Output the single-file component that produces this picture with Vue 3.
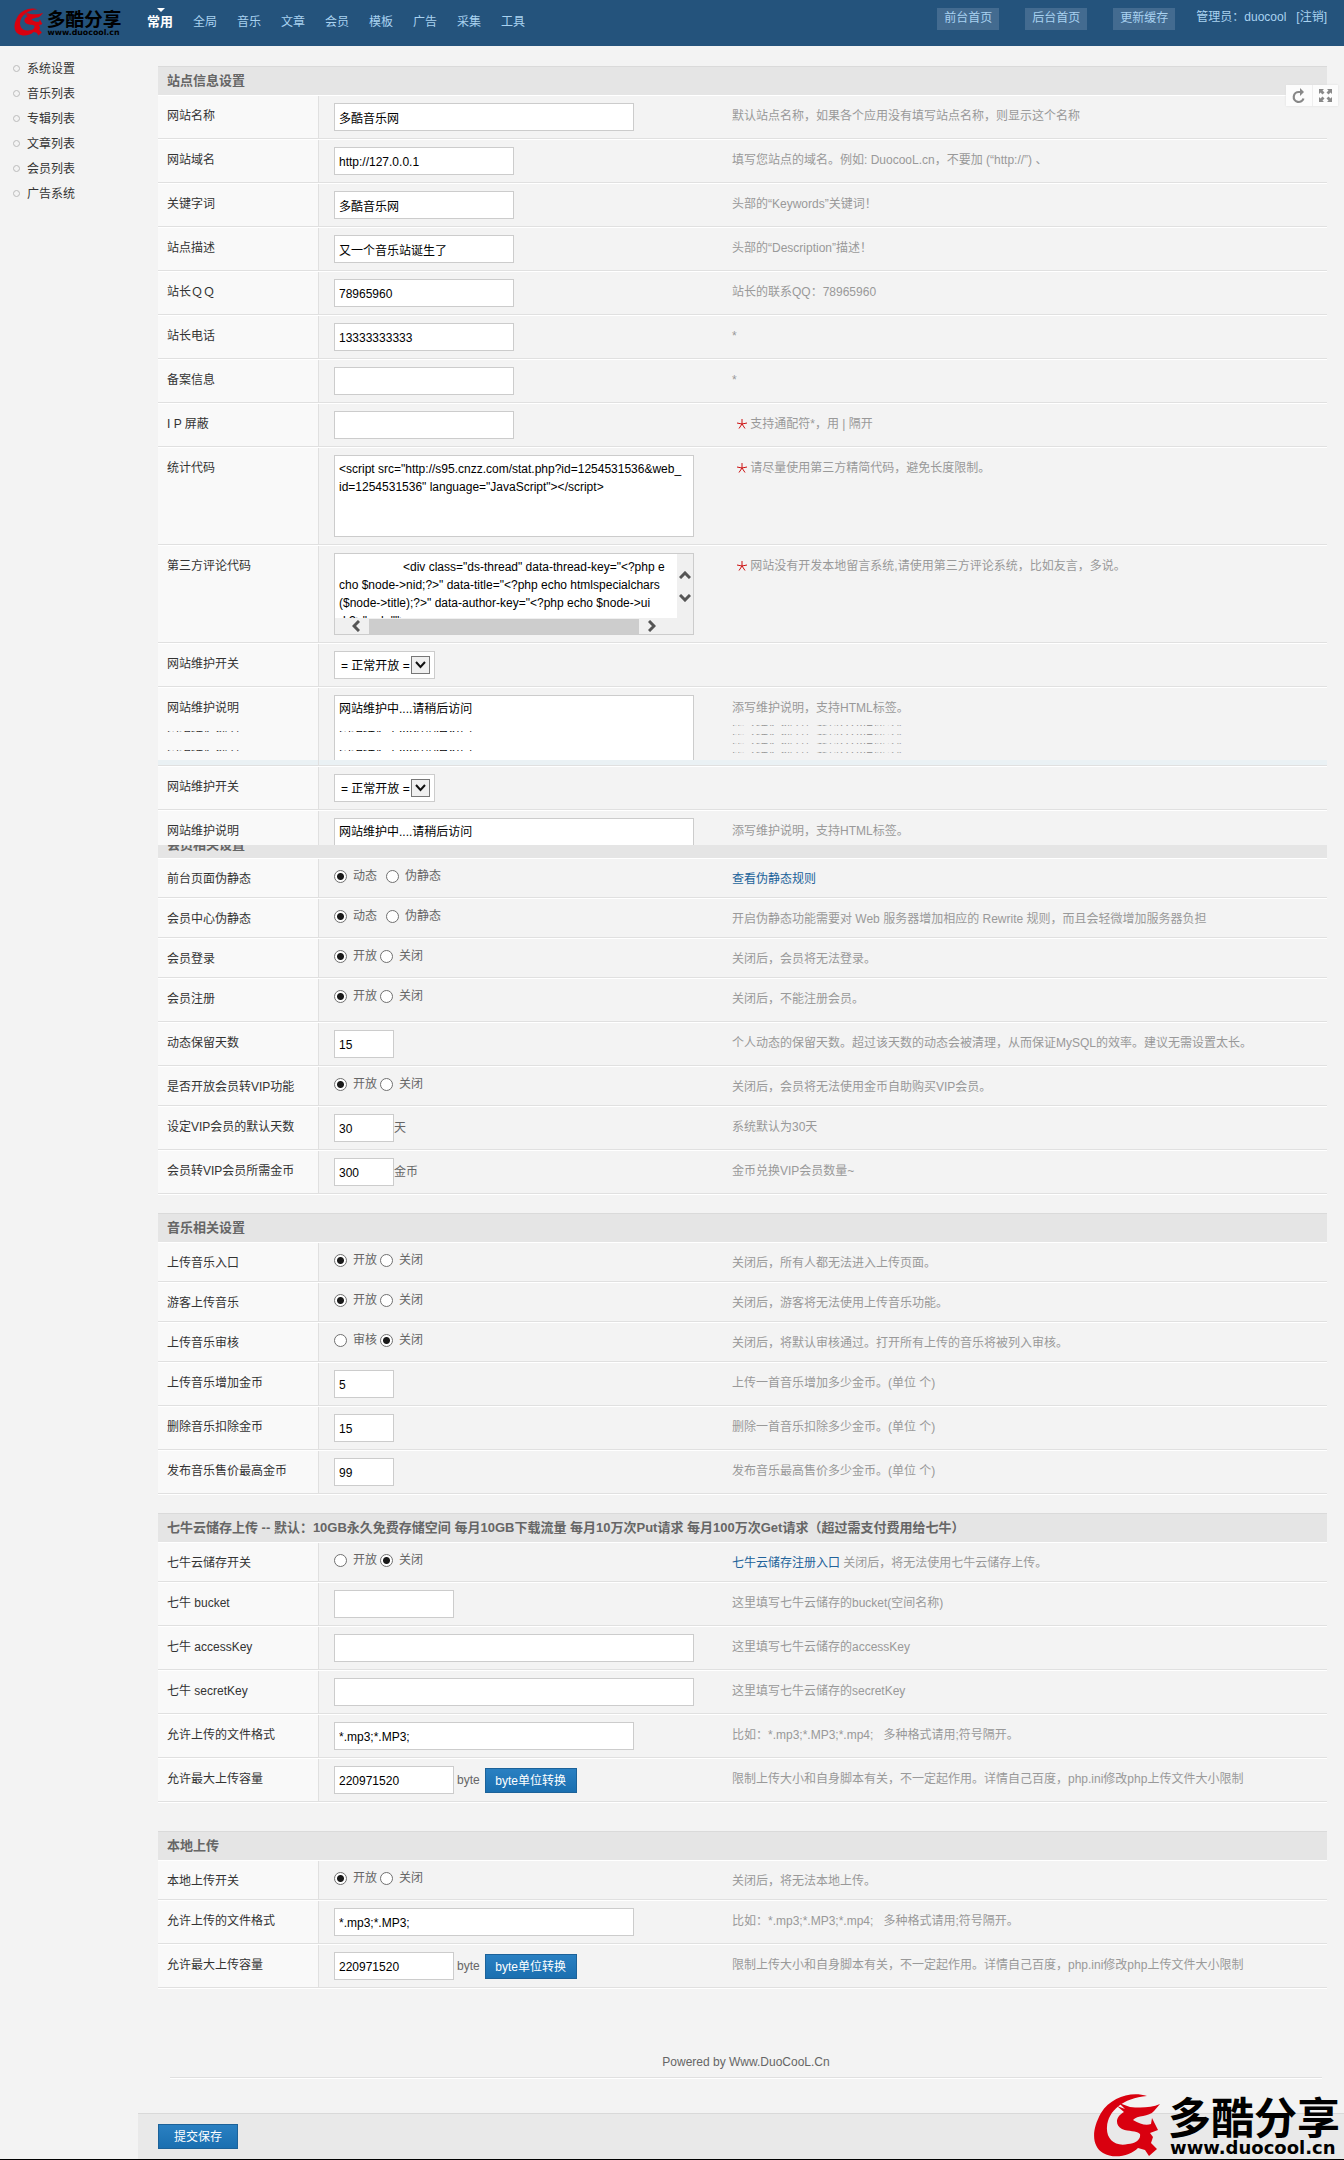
<template>
  <div class="page">
    <header class="topbar">
      <a href="#" class="logo" aria-label="多酷分享"><Brand /></a>
      <nav class="menu">
        <a v-for="(item, index) in menu" :key="item" href="#" :class="{ active: index === 0 }">{{ item }}</a>
      </nav>
      <div class="tools">
        <a v-for="item in shortcuts" :key="item" href="#" class="shortcut">{{ item }}</a>
        <span class="admin">管理员：duocool&nbsp;&nbsp; <a href="#">[注销]</a></span>
      </div>
    </header>

    <div class="body">
      <ul class="sidebar">
        <li v-for="item in sidebar" :key="item"><a href="#">{{ item }}</a></li>
      </ul>

      <main class="main">
        <div class="corner">
          <button type="button" aria-label="刷新">
            <svg width="14" height="16" viewBox="0 0 14 16">
              <path d="M11.5 10.5 A5 5 0 1 1 7 4 L9 4" fill="none" stroke="#888" stroke-width="2.2" />
              <path d="M8 0 L12 4 L8 8 Z" fill="#888" />
            </svg>
          </button>
          <button type="button" aria-label="全屏">
            <svg width="13" height="13" viewBox="0 0 13 13" fill="#888">
              <path d="M0 0 H5 L3.5 1.5 L5.5 3.5 L3.5 5.5 L1.5 3.5 L0 5 Z" />
              <path d="M13 0 V5 L11.5 3.5 L9.5 5.5 L7.5 3.5 L9.5 1.5 L8 0 Z" />
              <path d="M0 13 V8 L1.5 9.5 L3.5 7.5 L5.5 9.5 L3.5 11.5 L5 13 Z" />
              <path d="M13 13 H8 L9.5 11.5 L7.5 9.5 L9.5 7.5 L11.5 9.5 L13 8 Z" />
            </svg>
          </button>
        </div>

        <form class="settings" @submit.prevent>
          <section v-for="(section, s) in sections" :key="section.title" class="section" :class="section.kind">
            <h2><span>{{ section.title }}</span></h2>
            <div v-for="(row, r) in section.rows" :key="r" class="row" :class="row.kind">
              <div class="name">
                <label v-if="row.type !== 'radio'" :for="`f${s}-${r}`">{{ row.label }}</label>
                <span v-else :id="`f${s}-${r}`">{{ row.label }}</span>
                <template v-if="row.kind === 'torn'">
                  <div v-for="n in 2" :key="n" class="sliver" aria-hidden="true"><span>{{ row.label }}</span></div>
                </template>
              </div>

              <div class="control">
                <template v-if="row.type === 'text'">
                  <input :id="`f${s}-${r}`" v-model="row.value" type="text" :class="row.size" />
                  <span v-if="row.unit" class="unit">{{ row.unit }}</span>
                  <template v-if="row.convert">
                    <span class="unit spaced">byte</span>
                    <button type="button" class="btn convert">byte单位转换</button>
                  </template>
                </template>

                <div v-else-if="row.type === 'radio'" class="radios" :class="{ wide: row.options[1] === '伪静态' }" role="radiogroup" :aria-labelledby="`f${s}-${r}`">
                  <label v-for="option in row.options" :key="option">
                    <input v-model="row.value" type="radio" :name="`r${s}-${r}`" :value="option" />{{ option }}
                  </label>
                </div>

                <div v-else-if="row.type === 'select'" class="select">
                  <select :id="`f${s}-${r}`">
                    <option>= 正常开放 =</option>
                    <option>= 关闭维护 =</option>
                  </select>
                  <svg width="19" height="18" viewBox="0 0 19 18" aria-hidden="true">
                    <rect x="0.5" y="0.5" width="18" height="17" fill="#f0f0f0" stroke="#777" />
                    <path d="M5 6 L9.5 11 L14 6" fill="none" stroke="#111" stroke-width="2" />
                  </svg>
                </div>

                <div v-else-if="row.type === 'scroll'" class="scrollbox">
                  <textarea :id="`f${s}-${r}`" v-model="row.value"></textarea>
                  <div class="vbar" aria-hidden="true">
                    <svg width="12" height="8" viewBox="0 0 12 8"><path d="M1 7 L6 2 L11 7" /></svg>
                    <svg width="12" height="8" viewBox="0 0 12 8"><path d="M1 1 L6 6 L11 1" /></svg>
                  </div>
                  <div class="hbar" aria-hidden="true">
                    <svg width="8" height="12" viewBox="0 0 8 12"><path d="M7 1 L2 6 L7 11" /></svg>
                    <span class="thumb"></span>
                    <svg width="8" height="12" viewBox="0 0 8 12"><path d="M1 1 L6 6 L1 11" /></svg>
                  </div>
                </div>

                <template v-else>
                  <textarea :id="`f${s}-${r}`" v-model="row.value" class="area"></textarea>
                  <div v-if="row.kind === 'torn'" class="overlay" aria-hidden="true">
                    <div v-for="n in 2" :key="n" class="sliver"><span>{{ row.value }}</span></div>
                  </div>
                </template>
              </div>

              <div class="hint">
                <svg v-if="row.star" class="star" width="10" height="10" viewBox="0 0 10 10" aria-hidden="true">
                  <path d="M5 5 V0 M5 5 L0 4 M5 5 L10 4 M5 5 L2 9.5 M5 5 L8 9.5" />
                </svg>
                <a v-if="row.link" href="#">{{ row.link }}</a>
                {{ row.hint }}
                <template v-if="row.kind === 'torn'">
                  <div v-for="n in 4" :key="n" class="sliver" aria-hidden="true"><span>{{ row.hint }}</span></div>
                </template>
              </div>
            </div>
          </section>

          <footer class="powered">Powered by Www.DuoCooL.Cn</footer>

          <div class="submitbar">
            <button type="submit" class="btn submit">提交保存</button>
            <Brand class="watermark" />
          </div>
        </form>
      </main>
    </div>
  </div>
</template>

<script setup>
import { h, reactive } from "vue";

const dragon =
  "M54 3 C38 -2 18 4 8 20 C-2 38 -1 53 10 60 C22 67 38 62 45 55 L52 57 L56 63 L64 56 L58 50 L60 44 L57 40 L65 37 L59 25 L58 31 C53 33 47 31 40 27 C44 22 56 24 61 18 L67 11 C58 15 47 15 37 14 L26 10 L32 16 L24 13 L31 19 C22 24 22 32 29 36 C36 39 43 37 47 41 C48 47 42 51 35 51 C22 54 13 46 14 34 C15 18 30 5 54 3 Z";

const Brand = () =>
  h("svg", { viewBox: "0 0 248 66", class: "brand" }, [
    h("path", { d: dragon, fill: "#d9000f" }),
    h("text", { x: 75, y: 41, class: "brand-name" }, "多酷分享"),
    h("text", { x: 77, y: 61, class: "brand-url" }, "www.duocool.cn"),
  ]);

const menu = ["常用", "全局", "音乐", "文章", "会员", "模板", "广告", "采集", "工具"];
const shortcuts = ["前台首页", "后台首页", "更新缓存"];
const sidebar = ["系统设置", "音乐列表", "专辑列表", "文章列表", "会员列表", "广告系统"];

const text = (label, value, size, hint, extra = {}) => ({ type: "text", label, value, size, hint, ...extra });
const radio = (label, options, value, hint, extra = {}) => ({ type: "radio", label, options, value, hint, ...extra });

const onOff = ["开放", "关闭"];
const staticModes = ["动态", "伪静态"];

const statCode = `<script src="http://s95.cnzz.com/stat.php?id=1254531536&web_
id=1254531536" language="JavaScript"><\/script>`;

const commentCode = `<div class="ds-thread" data-thread-key="<?php e
cho $node->nid;?>" data-title="<?php echo htmlspecialchars
($node->title);?>" data-author-key="<?php echo $node->ui
d;?>" url="">`;

const formatHint = "比如：*.mp3;*.MP3;*.mp4;\u00a0\u00a0 多种格式请用;符号隔开。";
const sizeHint = "限制上传大小和自身脚本有关，不一定起作用。详情自己百度，php.ini修改php上传文件大小限制";
const maintainText = "网站维护中....请稍后访问";
const maintainHint = "添写维护说明，支持HTML标签。";

const sections = reactive([
  {
    title: "站点信息设置",
    kind: "joined",
    rows: [
      text("网站名称", "多酷音乐网", "large", "默认站点名称，如果各个应用没有填写站点名称，则显示这个名称"),
      text("网站域名", "http://127.0.0.1", "medium", "填写您站点的域名。例如: DuocooL.cn，不要加 (“http://”) 、"),
      text("关键字词", "多酷音乐网", "medium", "头部的“Keywords”关键词！"),
      text("站点描述", "又一个音乐站诞生了", "medium", "头部的“Description”描述！"),
      text("站长ＱＱ", "78965960", "medium", "站长的联系QQ：78965960"),
      text("站长电话", "13333333333", "medium", "*"),
      text("备案信息", "", "medium", "*"),
      text("I P 屏蔽", "", "medium", "支持通配符*，用 | 隔开", { star: true }),
      { type: "area", label: "统计代码", value: statCode, hint: "请尽量使用第三方精简代码，避免长度限制。", star: true },
      { type: "scroll", label: "第三方评论代码", value: commentCode, hint: "网站没有开发本地留言系统,请使用第三方评论系统，比如友言，多说。", star: true },
      { type: "select", label: "网站维护开关" },
      { type: "area", label: "网站维护说明", value: maintainText, hint: maintainHint, kind: "torn" },
      { type: "select", label: "网站维护开关" },
      { type: "area", label: "网站维护说明", value: maintainText, hint: maintainHint, kind: "cut" },
    ],
  },
  {
    title: "会员相关设置",
    kind: "covered",
    rows: [
      radio("前台页面伪静态", staticModes, "动态", "", { link: "查看伪静态规则" }),
      radio("会员中心伪静态", staticModes, "动态", "开启伪静态功能需要对 Web 服务器增加相应的 Rewrite 规则，而且会轻微增加服务器负担"),
      radio("会员登录", onOff, "开放", "关闭后，会员将无法登录。"),
      radio("会员注册", onOff, "开放", "关闭后，不能注册会员。", { kind: "tall" }),
      text("动态保留天数", "15", "tiny", "个人动态的保留天数。超过该天数的动态会被清理，从而保证MySQL的效率。建议无需设置太长。"),
      radio("是否开放会员转VIP功能", onOff, "开放", "关闭后，会员将无法使用金币自助购买VIP会员。"),
      text("设定VIP会员的默认天数", "30", "tiny", "系统默认为30天", { unit: "天" }),
      text("会员转VIP会员所需金币", "300", "tiny", "金币兑换VIP会员数量~", { unit: "金币" }),
    ],
  },
  {
    title: "音乐相关设置",
    rows: [
      radio("上传音乐入口", onOff, "开放", "关闭后，所有人都无法进入上传页面。"),
      radio("游客上传音乐", onOff, "开放", "关闭后，游客将无法使用上传音乐功能。"),
      radio("上传音乐审核", ["审核", "关闭"], "关闭", "关闭后，将默认审核通过。打开所有上传的音乐将被列入审核。"),
      text("上传音乐增加金币", "5", "tiny", "上传一首音乐增加多少金币。(单位 个)"),
      text("删除音乐扣除金币", "15", "tiny", "删除一首音乐扣除多少金币。(单位 个)"),
      text("发布音乐售价最高金币", "99", "tiny", "发布音乐最高售价多少金币。(单位 个)"),
    ],
  },
  {
    title: "七牛云储存上传 -- 默认：10GB永久免费存储空间 每月10GB下载流量 每月10万次Put请求 每月100万次Get请求（超过需支付费用给七牛）",
    kind: "cloud",
    rows: [
      radio("七牛云储存开关", onOff, "关闭", "关闭后，将无法使用七牛云储存上传。", { link: "七牛云储存注册入口" }),
      text("七牛 bucket", "", "small", "这里填写七牛云储存的bucket(空间名称)"),
      text("七牛 accessKey", "", "full", "这里填写七牛云储存的accessKey"),
      text("七牛 secretKey", "", "full", "这里填写七牛云储存的secretKey"),
      text("允许上传的文件格式", "*.mp3;*.MP3;", "large", formatHint),
      text("允许最大上传容量", "220971520", "small", sizeHint, { convert: true }),
    ],
  },
  {
    title: "本地上传",
    rows: [
      radio("本地上传开关", onOff, "开放", "关闭后，将无法本地上传。"),
      text("允许上传的文件格式", "*.mp3;*.MP3;", "large", formatHint),
      text("允许最大上传容量", "220971520", "small", sizeHint, { convert: true }),
    ],
  },
]);
</script>

<style>
body {
  background: #f3f3f3;
}

.brand {
  display: block;
  width: 100%;
}

.brand-name {
  font: bold 43px "Noto Sans CJK SC", sans-serif;
}

.brand-url {
  font: bold 18px "DejaVu Sans", sans-serif;
}
</style>

<style scoped>
.page {
  font: 12px/18px "Liberation Sans", "Noto Sans CJK SC", sans-serif;
  color: #666;
  border-bottom: 1px solid #000;
}

.page *,
.page *::before {
  box-sizing: border-box;
}

a {
  text-decoration: none;
  color: inherit;
}

input,
select,
textarea,
button {
  font: inherit;
  margin: 0;
}

/* top bar */
.topbar {
  display: flex;
  align-items: flex-start;
  height: 46px;
  padding: 0 17px 0 14px;
  background: #24537c;
  color: #a9d2f0;
}

.logo {
  width: 108px;
  height: 29px;
  margin: 8px 25px 0 0;
}

.menu {
  display: flex;
  gap: 20px;
  padding-top: 13px;
}

.menu .active {
  position: relative;
  width: 26px;
  font-size: 13px;
  font-weight: bold;
  color: #fff;
}

.menu .active::before {
  content: "";
  position: absolute;
  top: -5px;
  left: 10px;
  border: 4px solid transparent;
  border-top-color: #fff;
  border-bottom: 0;
}

.tools {
  display: flex;
  gap: 26px;
  margin-left: auto;
  padding-top: 8px;
}

.shortcut {
  width: 62px;
  height: 22px;
  line-height: 21px;
  text-align: center;
  background: #436b90;
}

.admin {
  margin-left: -5px;
}

/* layout */
.body {
  display: flex;
}

.sidebar {
  flex: 0 0 138px;
  margin: 0;
  padding: 10px 0 0 13px;
  list-style: none;
  color: #333;
}

.sidebar li {
  display: flex;
  align-items: center;
  gap: 7px;
  height: 25px;
}

.sidebar li::before {
  content: "";
  width: 7px;
  height: 7px;
  border: 1px solid #bbb;
  border-radius: 50%;
}

.main {
  position: relative;
  flex: 1;
  min-width: 0;
  padding-top: 20px;
}

.corner {
  position: absolute;
  top: 39px;
  right: 6px;
  display: flex;
  box-shadow: 0 0 2px #ddd;
}

.corner button {
  display: flex;
  align-items: center;
  justify-content: center;
  width: 26px;
  height: 21px;
  padding: 0;
  border: 0;
  background: #fcfcfc;
}

.corner button + button {
  border-left: 1px solid #eee;
}

/* settings */
.section {
  margin: 0 17px 18px 20px;
  border-bottom: 1px solid #fff;
}

.section.joined {
  margin-bottom: 0;
  border-bottom: 0;
}

.section.cloud {
  margin-bottom: 28px;
}

h2 {
  height: 29px;
  margin: 0;
  padding-left: 9px;
  border-top: 1px solid #dadada;
  background: #e5e5e5;
  font-size: 13px;
  line-height: 28px;
  font-weight: bold;
  color: #666;
}

.covered h2 {
  display: flex;
  align-items: flex-end;
  height: 13px;
  padding-bottom: 4px;
  border-top: 0;
  line-height: 18px;
  overflow: hidden;
}

.row {
  display: flex;
  border-top: 1px solid #fff;
  border-bottom: 1px solid #e0e0e0;
  min-height: 40px;
}

.row.tall {
  min-height: 44px;
}

.name {
  flex: 0 0 161px;
  padding: 11px 0 0 9px;
  border-right: 1px solid #e0e0e0;
  background: #f9f9f9;
  color: #333;
}

.control {
  position: relative;
  display: flex;
  align-items: flex-start;
  flex: 0 0 413px;
  padding: 7px 0 7px 15px;
}

.hint {
  flex: 1;
  padding-top: 11px;
  color: #999;
}

.hint a {
  color: #21629a;
}

.star {
  margin: 0 0 0 5px;
  vertical-align: -1px;
  fill: none;
  stroke: #cc1111;
}

.control input[type="text"] {
  height: 28px;
  padding: 1px 4px 0;
  border: 1px solid #ccc;
  background: #fff;
  color: #000;
}

.tiny {
  width: 60px;
}

.small {
  width: 120px;
}

.medium {
  width: 180px;
}

.large {
  width: 300px;
}

.full {
  width: 360px;
}

.unit {
  padding-top: 5px;
}

.unit.spaced {
  margin: 0 5px 0 3px;
}

.radios {
  display: flex;
  gap: 3px;
  height: 20px;
}

.radios.wide {
  gap: 9px;
}

.radios label {
  display: flex;
  align-items: center;
  gap: 6px;
}

.radios input {
  appearance: none;
  width: 13px;
  height: 13px;
  border: 1px solid #707070;
  border-radius: 50%;
  background: #fff;
}

.radios input:checked {
  background: radial-gradient(circle, #1a1a1a 3px, #fff 4px);
}

.select {
  position: relative;
  width: 101px;
  height: 28px;
}

.select select {
  appearance: none;
  width: 100%;
  height: 100%;
  padding: 2px 0 0 6px;
  border: 1px solid #ccc;
  border-radius: 0;
  background: #fff;
  color: #000;
}

.select svg {
  position: absolute;
  top: 5px;
  right: 5px;
  pointer-events: none;
}

textarea {
  padding: 4px;
  border: 1px solid #ccc;
  background: #fff;
  color: #000;
  resize: none;
  overflow: hidden;
  white-space: pre;
}

.area {
  width: 360px;
  height: 82px;
}

.scrollbox {
  display: grid;
  grid-template: 64px 16px / 342px 16px;
  width: 360px;
  height: 82px;
  border: 1px solid #ccc;
  background: #f0f0f0;
}

.scrollbox textarea {
  border: 0;
  text-indent: 64px;
}

.vbar {
  display: flex;
  flex-direction: column;
  align-items: center;
  justify-content: center;
  gap: 15px;
}

.hbar {
  display: flex;
  align-items: center;
  gap: 9px;
  padding-left: 17px;
}

.thumb {
  width: 270px;
  height: 15px;
  background: #cdcdcd;
}

.vbar path,
.hbar path {
  fill: none;
  stroke: #555;
  stroke-width: 3;
}

/* rows whose lower part was painted over while scrolling */
.torn {
  height: 79px;
  background: linear-gradient(#eaf1f4, #eaf1f4) bottom / 100% 5px no-repeat;
}

.torn .name {
  background: linear-gradient(#eaf1f4, #eaf1f4) bottom / 100% 5px no-repeat #f9f9f9;
}

.torn .area {
  height: 65px;
  border-bottom: 0;
}

.cut {
  height: 35px;
  min-height: 0;
  border-bottom: 0;
  overflow: hidden;
}

.sliver {
  height: 1px;
  overflow: hidden;
}

.sliver span {
  display: block;
  margin-top: -12px;
}

.name .sliver,
.overlay .sliver {
  margin: 14px 0 18px;
}

.hint .sliver {
  margin: 8px 0;
}

.overlay {
  position: absolute;
  top: 29px;
  left: 20px;
  color: #000;
}

.btn {
  height: 25px;
  padding: 1px 0 0;
  border: 1px solid #1c6299;
  background: linear-gradient(#2a80c2, #1a6fb0);
  color: #fff;
  text-align: center;
}

.convert {
  width: 92px;
  margin-top: 2px;
}

.powered {
  margin: 64px 22px 35px 32px;
  padding-bottom: 6px;
  border-bottom: 1px solid #e0e0e0;
  box-shadow: 0 1px #fff;
  text-align: center;
}

.submitbar {
  position: relative;
  height: 46px;
  padding: 10px 20px 0;
  border-top: 1px solid #d9d9d9;
  background: #e9e9e9;
}

.submit {
  width: 80px;
}

.watermark {
  position: absolute;
  right: 3px;
  bottom: 0;
  width: 248px;
  height: 66px;
}
</style>
